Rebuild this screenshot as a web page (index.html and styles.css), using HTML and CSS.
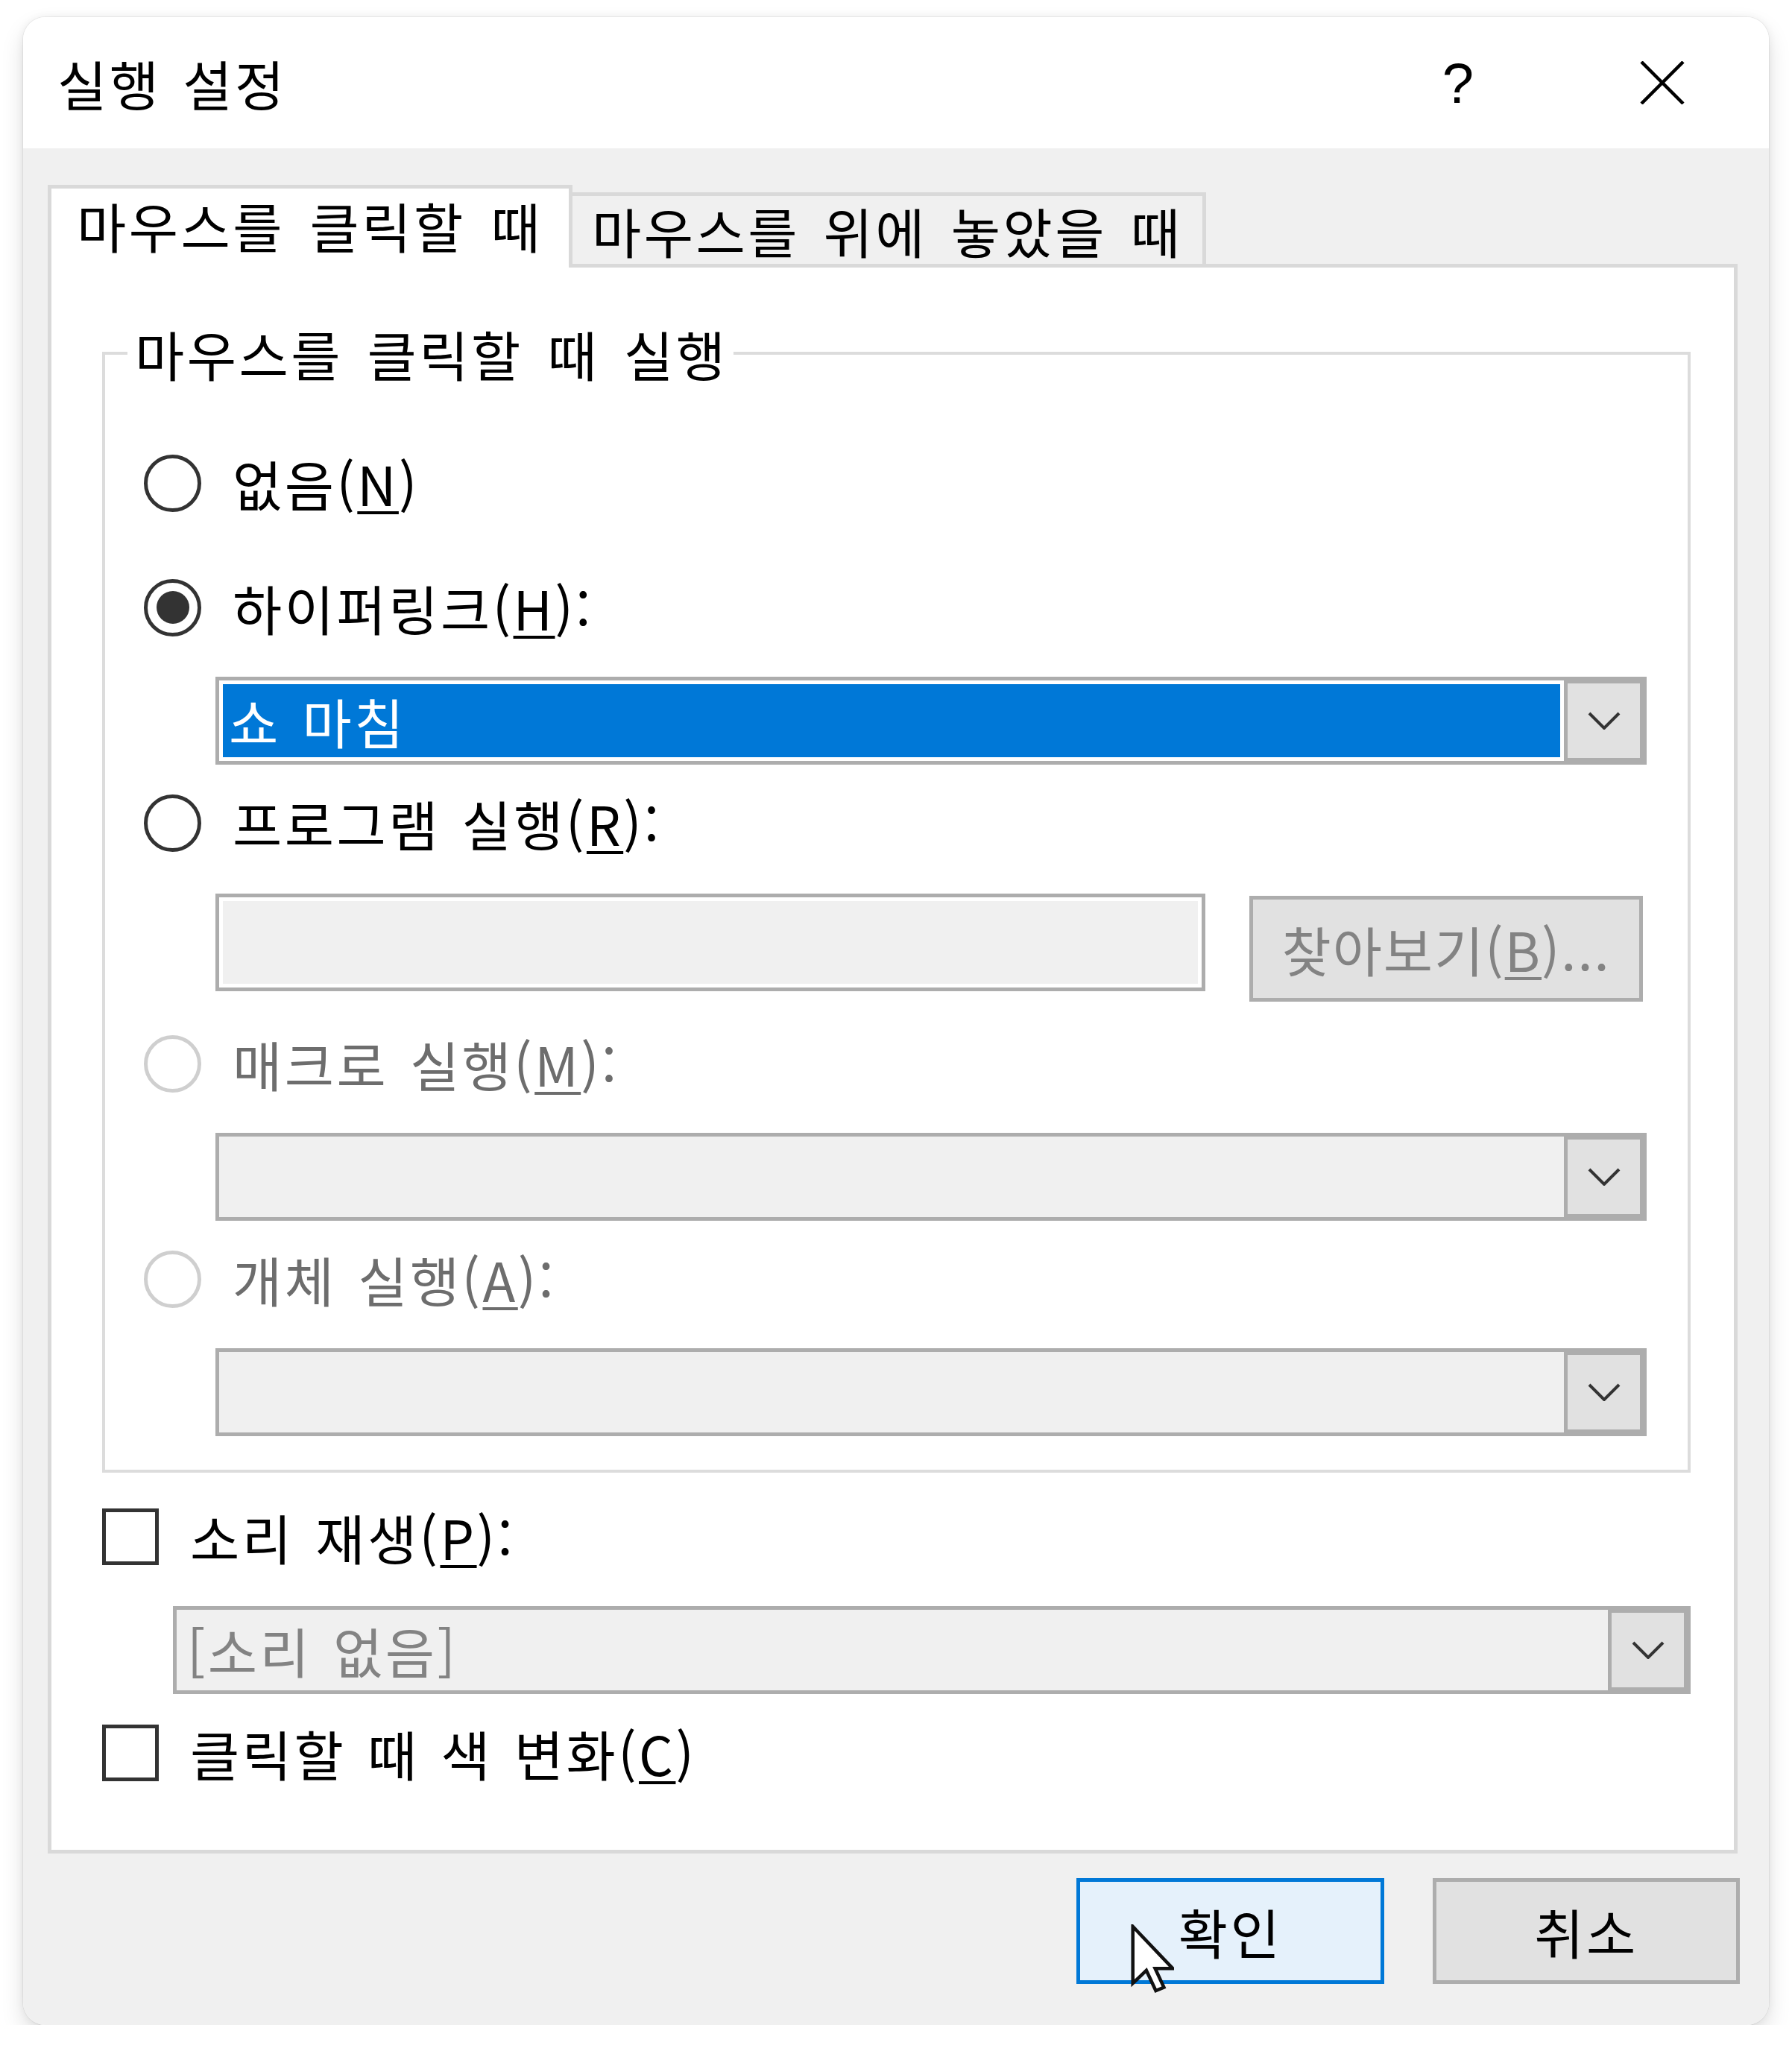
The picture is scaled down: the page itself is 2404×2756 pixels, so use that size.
FILE: index.html
```html
<!DOCTYPE html>
<html lang="ko">
<head>
<meta charset="utf-8">
<title>실행 설정</title>
<link rel="stylesheet" href="styles.css">
</head>
<body>
<div class="window">
  <header class="titlebar">
    <div class="title">실행 설정</div>
    <div class="tb-btn help">?</div>
    <div class="tb-btn close">
      <svg width="60" height="58" viewBox="0 0 60 58"><path d="M2 1 L58 57 M58 1 L2 57" stroke="#000" stroke-width="4.5" fill="none"/></svg>
    </div>
  </header>
  <main class="body">
    <div class="tabs">
      <div class="tab tab-active">마우스를 클릭할 때</div>
      <div class="tab tab-inactive">마우스를 위에 놓았을 때</div>
    </div>
    <section class="panel">
      <fieldset class="group">
        <legend>마우스를 클릭할 때 실행</legend>
        <div class="opt"><span class="radio"></span><span>없음(<u>N</u>)</span></div>
        <div class="opt opt-gap-lg"><span class="radio checked"></span><span>하이퍼링크(<u>H</u>):</span></div>
        <div class="combo combo-in-group">
          <div class="combo-field active"><div class="combo-sel">쇼 마침</div></div>
          <div class="combo-btn"><svg width="44" height="24" viewBox="0 0 44 24"><polyline points="2,2 22,22 42,2" fill="none" stroke="#333" stroke-width="4"/></svg></div>
        </div>
        <div class="opt opt-after-combo"><span class="radio"></span><span>프로그램 실행(<u>R</u>):</span></div>
        <div class="file-row">
          <div class="file-input"></div>
          <div class="btn btn-browse">찾아보기(<u>B</u>)...</div>
        </div>
        <div class="opt opt-after-file disabled"><span class="radio"></span><span>매크로 실행(<u>M</u>):</span></div>
        <div class="combo combo-in-group">
          <div class="combo-field"></div>
          <div class="combo-btn"><svg width="44" height="24" viewBox="0 0 44 24"><polyline points="2,2 22,22 42,2" fill="none" stroke="#333" stroke-width="4"/></svg></div>
        </div>
        <div class="opt opt-after-combo disabled"><span class="radio"></span><span>개체 실행(<u>A</u>):</span></div>
        <div class="combo combo-in-group">
          <div class="combo-field"></div>
          <div class="combo-btn"><svg width="44" height="24" viewBox="0 0 44 24"><polyline points="2,2 22,22 42,2" fill="none" stroke="#333" stroke-width="4"/></svg></div>
        </div>
      </fieldset>
      <div class="check check-first"><span class="checkbox"></span><span>소리 재생(<u>P</u>):</span></div>
      <div class="combo combo-sound">
        <div class="combo-field muted">[소리 없음]</div>
        <div class="combo-btn"><svg width="44" height="24" viewBox="0 0 44 24"><polyline points="2,2 22,22 42,2" fill="none" stroke="#333" stroke-width="4"/></svg></div>
      </div>
      <div class="check check-second"><span class="checkbox"></span><span>클릭할 때 색 변화(<u>C</u>)</span></div>
    </section>
    <div class="actions">
      <button class="btn btn-ok">확인<svg class="cursor" width="58" height="92" viewBox="-0.6 -0.6 12.8 20.2"><path d="M0 0 L0 16.8 L4 13 L6.8 19 L9.2 18 L6.6 12.4 L11.8 12.4 Z" fill="#fff" stroke="#111" stroke-width="1" stroke-linejoin="miter"/></svg></button>
      <button class="btn btn-cancel">취소</button>
    </div>
  </main>
</div>
</body>
</html>
```

FILE: styles.css
```css
* { box-sizing: border-box; }

html, body {
  margin: 0;
  padding: 0;
  background: #ffffff;
}

body {
  font-family: "Noto Sans CJK KR", "Noto Sans", sans-serif;
  font-size: 72px;
  color: #000;
  letter-spacing: 3.5px;
  word-spacing: 5px;
}

.window {
  margin: 23px 0 0 31px;
  width: 2342px;
  height: 2694px;
  border-radius: 30px;
  overflow: hidden;
  display: flex;
  flex-direction: column;
  box-shadow: 0 0 0 1px rgba(0,0,0,0.05), 0 14px 30px rgba(0,0,0,0.13), 0 0 12px rgba(0,0,0,0.06);
}

.titlebar {
  flex: none;
  height: 176px;
  background: #fff;
  display: flex;
  align-items: center;
  padding: 0 83px 0 46px;
}

.title {
  flex: 1;
  line-height: 1;
}

.tb-btn {
  width: 120px;
  height: 120px;
  display: flex;
  align-items: center;
  justify-content: center;
  letter-spacing: 0;
}

.help {
  font-family: "Liberation Sans", sans-serif;
  font-size: 76px;
  margin-right: 154px;
}

.body {
  flex: 1;
  background: #f0f0f0;
  padding: 49px 42px 0 33px;
}

.tabs {
  display: flex;
  align-items: flex-end;
}

.tab {
  display: flex;
  align-items: center;
  border: 5px solid #d9d9d9;
  border-bottom: none;
  line-height: 1;
  white-space: nowrap;
}

.tab-active {
  width: 704px;
  height: 111px;
  background: #fff;
  margin-bottom: -5px;
  position: relative;
  z-index: 1;
  padding: 0 0 8px 34px;
  word-spacing: 10px;
}

.tab-inactive {
  width: 850px;
  height: 96px;
  background: #f0f0f0;
  border-left: none;
  padding-left: 26px;
  word-spacing: 8px;
}

.panel {
  height: 2133px;
  border: 5px solid #d9d9d9;
  background: #fff;
  padding: 0 58px 89px 68px;
}

.group {
  margin: 75px 0 0 0;
  border: 4px solid #dcdcdc;
  padding: 94px 55px 45px 0;
  min-width: 0;
}

.group legend {
  margin-left: 30px;
  padding: 0 8px 0 10px;
  height: 80px;
  line-height: 80px;
  word-spacing: 9px;
}

.opt {
  display: flex;
  align-items: center;
  height: 80px;
  padding-left: 52px;
  gap: 42px;
  line-height: 1;
}

.opt-gap-lg { margin-top: 87px; }
.opt-after-combo { margin-top: 38px; }
.opt-after-file { margin-top: 43px; }

.radio {
  flex: none;
  width: 77px;
  height: 77px;
  border: 5px solid #333;
  border-radius: 50%;
  background: #fff;
  display: flex;
  align-items: center;
  justify-content: center;
}

.radio.checked::after {
  content: "";
  width: 44px;
  height: 44px;
  border-radius: 50%;
  background: #333;
}

.disabled { color: #6d6d6d; }
.disabled .radio { border-color: #cfcfcf; }

u {
  text-decoration-thickness: 4px;
  text-underline-offset: 7px;
}

.combo {
  display: flex;
  height: 118px;
  border: 5px solid #adadad;
  background: #adadad;
}

.combo-in-group {
  margin: 53px 0 0 148px;
}

.combo-field {
  flex: 1;
  background: #f0f0f0;
  display: flex;
  align-items: center;
  padding-left: 14px;
  line-height: 1;
}

.combo-field.active {
  background: #fff;
  padding: 5px;
}

.combo-field.muted { color: #838383; }

.combo-sel {
  flex: 1;
  align-self: stretch;
  background: #0078d7;
  color: #fff;
  display: flex;
  align-items: center;
  padding-left: 8px;
}

.combo-btn {
  flex: none;
  width: 97px;
  margin: 4px 4px 4px 5px;
  background: #e1e1e1;
  display: flex;
  align-items: center;
  justify-content: center;
}

.file-row {
  display: flex;
  align-items: flex-start;
  gap: 59px;
  margin: 55px 5px 0 148px;
}

.file-input {
  flex: 1;
  height: 131px;
  border: 5px solid #adadad;
  background: #f0f0f0;
  box-shadow: inset 0 0 0 5px #fff;
}

.btn {
  font: inherit;
  letter-spacing: inherit;
  word-spacing: inherit;
  display: flex;
  align-items: center;
  justify-content: center;
  height: 142px;
  border: 5px solid #adadad;
  background: #e1e1e1;
  color: #000;
  padding: 0;
  margin: 0;
  line-height: 1;
  overflow: visible;
  white-space: nowrap;
}

.btn-browse {
  flex: none;
  width: 528px;
  margin-top: 3px;
  color: #838383;
  letter-spacing: 2px;
}

.check {
  display: flex;
  align-items: center;
  height: 80px;
  gap: 42px;
  line-height: 1;
}

.check-first { margin-top: 46px; }
.check-second { margin-top: 39px; }

.checkbox {
  flex: none;
  width: 76px;
  height: 76px;
  border: 5px solid #333;
  background: #fff;
}

.combo-sound {
  margin: 53px 0 0 95px;
}

.actions {
  display: flex;
  justify-content: flex-end;
  gap: 65px;
  margin: 33px -3px 0 0;
}

.btn-ok {
  width: 413px;
  border-color: #0078d7;
  background: #e5f1fb;
  position: relative;
}

.btn-cancel {
  width: 412px;
}

.cursor {
  position: absolute;
  left: 68px;
  top: 57px;
}
```
